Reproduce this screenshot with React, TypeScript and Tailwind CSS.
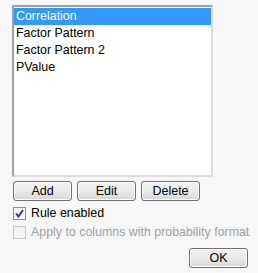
import React from 'react';

const items = ['Correlation', 'Factor Pattern', 'Factor Pattern 2', 'PValue'];

const WinButton: React.FC<{ label: string; className?: string }> = ({ label, className = '' }) => (
  <button
    className={`flex h-[20px] w-[59px] items-center justify-center rounded-[3px] border border-[#707070] bg-gradient-to-b from-[#f2f2f2] via-[#ebebeb] to-[#d6d6d6] text-[12.5px] leading-none text-black shadow-[inset_0_0_0_1px_#fcfcfc] ${className}`}
  >
    {label}
  </button>
);

const App: React.FC = () => {
  return (
    <div
      className="h-[273px] w-[258px] bg-[#f7f7f7] pl-[12px] pt-[5px] text-[12.4px] text-black"
      style={{ fontFamily: '"Liberation Sans", Arial, sans-serif' }}
    >
      {/* list box */}
      <div className="h-[172px] w-[201px] border-2 border-t-[#a0a0a0] border-l-[#a0a0a0] border-r-[#dcdcdc] border-b-[#dcdcdc] bg-white pt-[1px]">
        {items.map((it, i) => (
          <div
            key={it}
            className={`flex h-[17px] items-center pl-[2px] leading-none ${i === 0 ? 'bg-[#3399ff] text-white' : ''}`}
          >
            {it}
          </div>
        ))}
      </div>

      {/* buttons */}
      <div className="mt-[4px] flex gap-[5px] pl-[1px]">
        <WinButton label="Add" />
        <WinButton label="Edit" />
        <WinButton label="Delete" />
      </div>

      {/* checkboxes */}
      <div className="mt-[3px] flex flex-col pl-[1px]">
        <label className="flex h-[19px] items-center gap-[5px]">
          <span className="flex h-[13px] w-[13px] items-center justify-center border border-[#8e8f8f] bg-gradient-to-br from-[#ececec] to-white">
            <svg width="9" height="9" viewBox="0 0 9 9">
              <path d="M1 4.5 L3.5 7.5 L8 1" fill="none" stroke="#2a2a8a" strokeWidth="1.8" />
            </svg>
          </span>
          <span>Rule enabled</span>
        </label>
        <label className="flex h-[19px] items-center gap-[5px] text-[#a0a0a0]">
          <span className="h-[13px] w-[13px] border border-[#c8c8c8] bg-[#f4f4f4]" />
          <span className="whitespace-nowrap">Apply to columns with probability format</span>
        </label>
      </div>

      {/* footer */}
      <div className="mt-[6px] flex justify-end pr-[10px]">
        <WinButton label="OK" />
      </div>
    </div>
  );
};

export default App;
